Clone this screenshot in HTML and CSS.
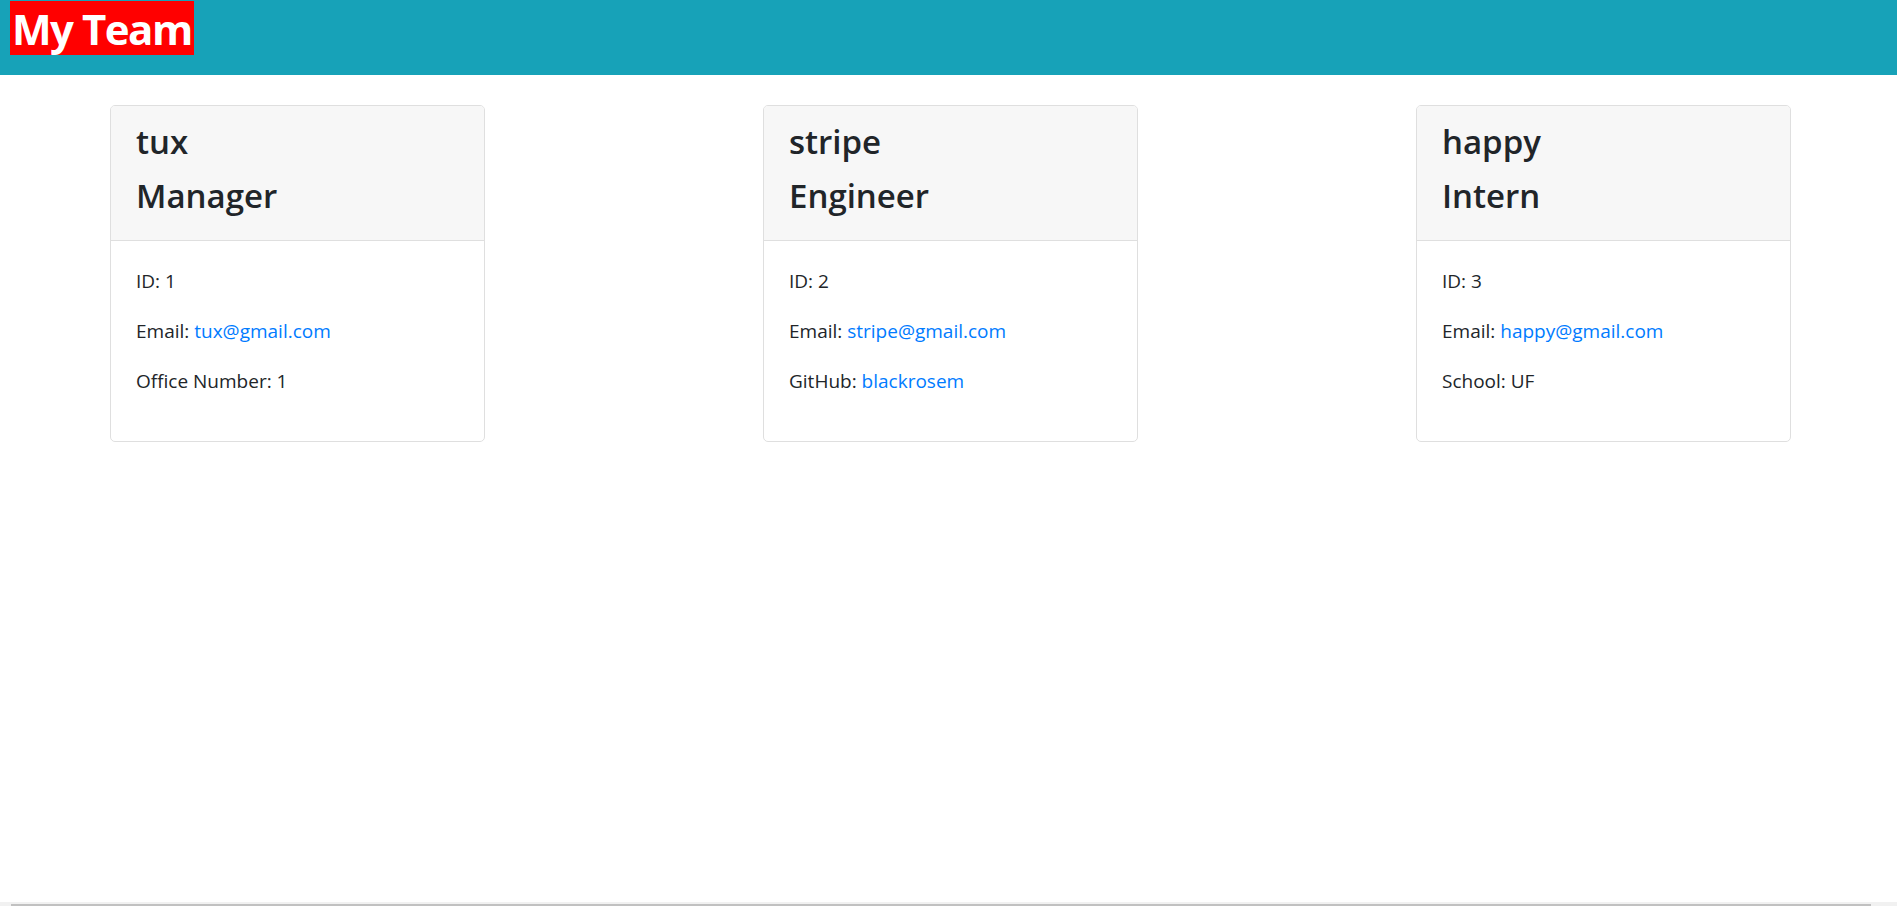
FILE: index.html
```html
<!DOCTYPE html>
<html lang="en">
<head>
<meta charset="utf-8">
<title>My Team</title>
<link rel="stylesheet" href="styles.css">
</head>
<body>
<header class="topbar">
  <h1 class="brand">My Team</h1>
</header>
<main class="team">
  <section class="card">
    <div class="card-header">
      <h3 class="card-title">tux</h3>
      <h3 class="card-title">Manager</h3>
    </div>
    <div class="card-body">
      <p>ID: 1</p>
      <p>Email: <a href="#">tux@gmail.com</a></p>
      <p>Office Number: 1</p>
    </div>
  </section>
  <section class="card">
    <div class="card-header">
      <h3 class="card-title">stripe</h3>
      <h3 class="card-title">Engineer</h3>
    </div>
    <div class="card-body">
      <p>ID: 2</p>
      <p>Email: <a href="#">stripe@gmail.com</a></p>
      <p>GitHub: <a href="#">blackrosem</a></p>
    </div>
  </section>
  <section class="card">
    <div class="card-header">
      <h3 class="card-title">happy</h3>
      <h3 class="card-title">Intern</h3>
    </div>
    <div class="card-body">
      <p>ID: 3</p>
      <p>Email: <a href="#">happy@gmail.com</a></p>
      <p>School: UF</p>
    </div>
  </section>
</main>
<div class="hscroll"><div class="hscroll-thumb"></div></div>
</body>
</html>
```
FILE: styles.css
```css
html, body {
  margin: 0;
  padding: 0;
}
body {
  font-family: "Open Sans", "Noto Sans", sans-serif;
  font-size: 19px;
  line-height: 30px;
  color: #212529;
  background: #fff;
}
.topbar {
  background: #17a2b8;
  height: 75px;
  padding: 1px 0 0 10px;
  box-sizing: border-box;
}
.brand {
  display: inline-block;
  margin: 0;
  padding: 0 2px 0 2px;
  background: #ff0000;
  color: #fff;
  font-size: 42px;
  letter-spacing: -1.5px;
  font-weight: 700;
  height: 54px;
  line-height: 56px;
  white-space: nowrap;
}
.team {
  display: flex;
  gap: 278px;
  padding: 30px 0 0 110px;
}
.card {
  width: 375px;
  box-sizing: border-box;
  border: 1px solid #dfdfdf;
  border-radius: 5px;
  overflow: hidden;
}
.card-header {
  background: #f7f7f7;
  border-bottom: 1px solid #dfdfdf;
  padding: 15px 25px 11px;
}
.card-title {
  margin: 0 0 12px;
  font-size: 33px;
  line-height: 42px;
  font-weight: 600;
}
.card-body {
  padding: 25px;
}
.card-body p {
  margin: 0 0 20px;
}
.card-body a {
  color: #007bff;
  text-decoration: none;
}
.hscroll {
  position: fixed;
  left: 0;
  right: 0;
  bottom: 0;
  height: 4px;
  background: #f1f1f1;
}
.hscroll-thumb {
  position: absolute;
  left: 11px;
  right: 26px;
  bottom: 0;
  height: 2px;
  background: #c1c1c1;
}
```
